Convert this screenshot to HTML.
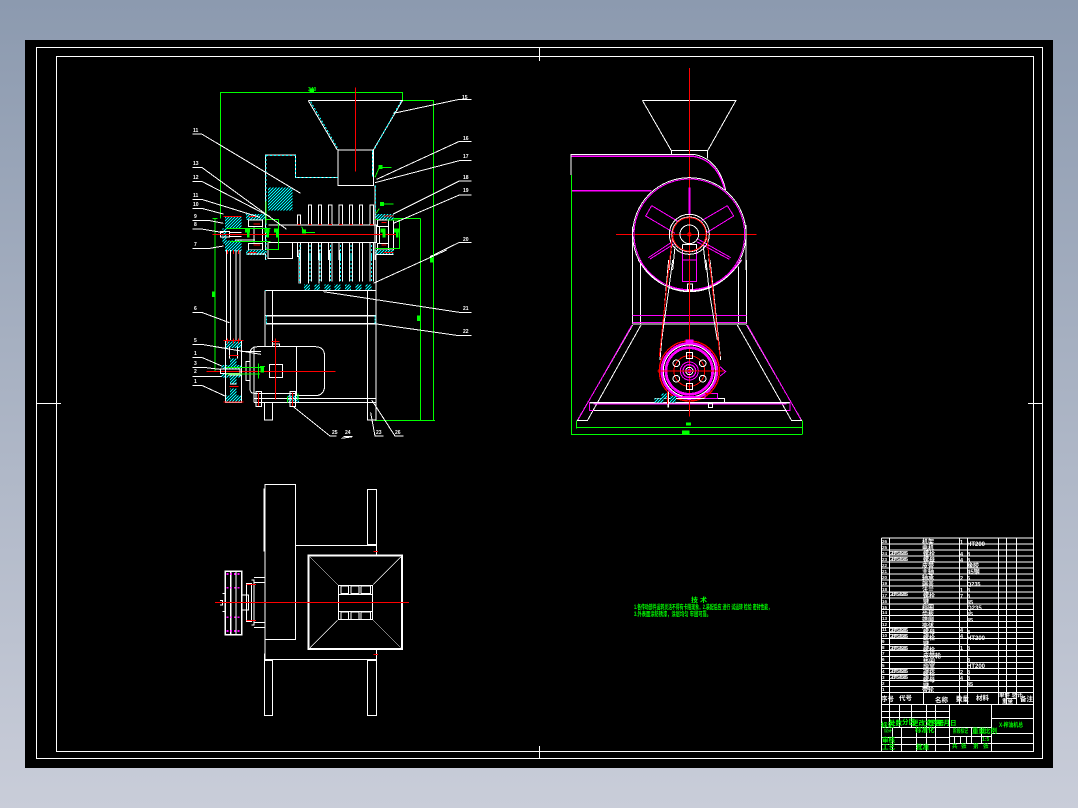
<!DOCTYPE html>
<html lang="zh">
<head>
<meta charset="utf-8">
<title>CAD drawing</title>
<style>
html,body{margin:0;padding:0;width:1078px;height:808px;overflow:hidden;background:linear-gradient(180deg,#8c9aaf 0%,#c9cdd9 100%)}
svg{position:absolute;left:0;top:0;display:block}
.w{stroke:#fff;fill:none}
.r{stroke:#f00;fill:none}
.m{stroke:#f0f;fill:none}
.g{stroke:#0f0;fill:none}
text{font-family:"Liberation Sans","Noto Sans CJK SC",sans-serif;font-weight:700}
</style>
</head>
<body>
<svg width="1078" height="808" viewBox="0 0 1078 808" xmlns="http://www.w3.org/2000/svg" shape-rendering="crispEdges">
<defs>
<pattern id="hz" patternUnits="userSpaceOnUse" width="9" height="9"><rect width="9" height="9" fill="#000"/><path d="M-1 10L10 -1M-5 5L5 -5M5 14L14 5" stroke="#0ff" stroke-width="4"/></pattern>
</defs>
<rect x="25" y="40" width="1028" height="728" fill="#000"/>
<!-- frames -->
<g class="w" stroke-width="1">
<rect x="36.5" y="47.5" width="1006" height="711"/>
<rect x="56.5" y="56.5" width="977" height="695"/>
<path d="M539.5 47V61M539.5 746V758M36 403.5H61M1028 403.5H1042"/>
</g>

<!-- MAIN VIEW upper: zoom coords -->
<g transform="translate(180 80) scale(.33333)" fill="none" stroke-width="3">
<path class="g" d="M121 415V37H667V62H760V540M667 37V62M721 415V540"/>
<path class="g" d="M590 415H721"/>
<path class="g" d="M105 415V540M98 415H112"/>
<rect x="388" y="25" width="14" height="12" fill="#0f0"/>
<!-- hatch -->
<g fill="url(#hz)" stroke="none">
<rect x="264" y="322" width="74" height="70"/>
<rect x="135" y="408" width="50" height="37"/>
<rect x="127" y="445" width="13" height="45"/>
<rect x="135" y="482" width="50" height="33"/>
<rect x="198" y="402" width="60" height="18"/>
<rect x="198" y="510" width="60" height="15"/>
<rect x="585" y="402" width="55" height="18"/>
<rect x="585" y="510" width="55" height="15"/>
</g>
<!-- funnel -->
<path class="w" d="M385 62H667L580 210M385 62L472 210"/>
<path stroke="#0ff" stroke-dasharray="6 5" d="M392 65L475 208M662 65L583 208"/>
<rect class="w" x="474" y="210" width="106" height="106"/>
<path class="w" d="M257 540V225H346V293H472M585 316V540M578 210V290"/>
<path stroke="#0ff" stroke-dasharray="6 6" stroke-width="3" d="M258 225V540M258 226H346V293H472M587 316V402M578 212V290"/>
<path class="r" d="M526 22V275"/>
<!-- shaft -->
<path class="w" d="M265 435H590V487H265M590 435V487M248 442V487M222 442V487"/>
<path class="w" d="M264 487V535H338V487"/>
<path class="w" d="M165 445H225M165 480H225M148 457H185M148 470H185"/>
<rect x="122" y="455" width="26" height="16" class="w"/>
<path class="w" d="M205 420H248V440H205ZM205 490H248V510H205ZM592 420H625V440H592ZM592 490H625V510H592ZM625 420H640V510H625ZM598 440V490"/>
<path class="w" d="M140 515V540M152 515V540M168 515V540M180 515V540"/>
<!-- ribs -->
<path class="w" d="M352 435V405H362V435M385 435V375H395V435M415 435V375H425V435M446 435V375H456V435M477 435V375H487V435M508 435V375H518V435M538 435V375H548V435M570 435V375H580V435"/>
<path class="r" stroke-width="3" d="M352 433H362M385 433H395M415 433H425M446 433H456M477 433H487M508 433H518M538 433H548M570 433H580"/>
<path class="w" d="M352 488V530H362V488M385 488V540M395 488V540M415 488V540M425 488V540M446 488V540M456 488V540M477 488V540M487 488V540M508 488V540M518 488V540M538 488V540M548 488V540M570 488V540M580 488V540"/>
<path stroke="#0ff" stroke-dasharray="6 6" d="M360 495V540M390 495V540M420 495V540M451 495V540M482 495V540M513 495V540M574 495V540"/>
<path class="r" d="M97 463H650M205 410H230M205 517H230M610 408H640M610 517H640M220 432H240M220 495H240M605 428H620M605 495H620M130 410H185"/>
<path class="r" d="M142 510V522M160 510V522M176 510V522"/>
<!-- green -->
<path class="g" d="M258 418H296V508H258M140 445H272M150 485H272M258 364V430M585 418H595M585 505H658V420H622M598 385L588 400M598 262L585 292"/>
<path class="g" stroke-width="3" d="M365 440L372 457H405M600 262H635M600 372H640"/>
<g fill="#0f0" stroke="none">
<rect x="195" y="446" width="15" height="12"/><rect x="201" y="458" width="8" height="14"/>
<rect x="253" y="446" width="15" height="12"/><rect x="259" y="458" width="8" height="14"/>
<rect x="282" y="446" width="15" height="12"/><rect x="288" y="458" width="8" height="14"/>
<rect x="602" y="446" width="15" height="12"/><rect x="608" y="458" width="8" height="14"/>
<rect x="642" y="446" width="15" height="12"/><rect x="648" y="458" width="8" height="14"/>
<rect x="366" y="448" width="12" height="12"/><rect x="595" y="255" width="12" height="12"/><rect x="600" y="366" width="12" height="12"/>
</g>
<!-- leaders -->
<path class="w" d="M640 100L838 58H875M590 298L838 184H875M585 308L838 242H875M640 402L838 303H875M640 430L838 345H875M750 530L838 487H875"/>
<path class="w" d="M362 340L65 162H38M320 448L65 262H38M270 410L65 304H38M240 412L65 358H38M130 402L65 385H38M130 430L90 422H38M130 458L65 447H38M130 498L90 505H38"/>
</g>

<!-- MAIN VIEW lower -->
<g transform="translate(180 250) scale(.33333)" fill="none" stroke-width="3">
<path class="g" d="M721 0V510M760 0V510M585 511H765M105 0V365"/>
<rect x="96" y="125" width="10" height="16" fill="#0f0"/>
<rect x="711" y="196" width="11" height="17" fill="#0f0"/>
<rect x="750" y="22" width="10" height="16" fill="#0f0"/>
<path class="w" d="M140 0V270M152 0V270M168 0V270M180 0V270"/>
<!-- ribs -->
<path class="w" d="M357 0V100M362 0V100M385 0V100M395 0V95M417 0V100M425 0V95M448 0V95M456 0V95M478 0V95M487 0V95M509 0V95M517 0V95M539 0V95M547 0V95M570 0V95M580 0V95"/>
<path stroke="#0ff" stroke-dasharray="6 6" stroke-width="3" d="M359 15V100M390 15V95M420 15V95M451 15V95M482 15V95M513 15V95M574 15V95"/>
<g fill="url(#hz)" stroke="none">
<rect x="372" y="103" width="18" height="18"/><rect x="403" y="103" width="17" height="18"/><rect x="433" y="103" width="19" height="18"/><rect x="464" y="103" width="18" height="18"/><rect x="495" y="103" width="18" height="18"/><rect x="526" y="103" width="18" height="18"/><rect x="556" y="103" width="18" height="18"/>
<rect x="136" y="274" width="49" height="20"/>
<rect x="150" y="325" width="20" height="28"/>
<rect x="124" y="345" width="60" height="10"/>
<rect x="124" y="372" width="60" height="10"/>
<rect x="150" y="382" width="20" height="20"/>
<rect x="150" y="415" width="20" height="22"/>
<rect x="136" y="437" width="49" height="20"/>
<rect x="322" y="435" width="35" height="22"/>
<rect x="198" y="0" width="60" height="12"/>
<rect x="585" y="0" width="55" height="14"/>
</g>
<path class="w" d="M264 0V25H338V0M200 12H258M590 14H640"/>
<path class="r" d="M205 7H230M610 7H640"/>
<path stroke="#0ff" stroke-width="3" stroke-dasharray="6 4" d="M255 122H590"/>
<path class="w" d="M255 122V290M277 122V290M258 122H590"/>
<path class="w" d="M588 0V510H562V122M562 122V458"/>
<path class="w" d="M257 197H586M258 222H586"/>
<path class="w" stroke-width="4" d="M258 197H586M258 221H586"/>
<path stroke="#0ff" stroke-width="3" stroke-dasharray="5 4" d="M259 197V222M585 197V222"/>
<path class="w" d="M254 458V510H277V458"/>
<path class="w" d="M222 445H586M222 458H586M222 430V458"/>
<!-- motor -->
<path class="w" d="M235 290H405Q434 290 434 320V405Q434 437 405 437H350V430H222Q210 430 210 415V310Q210 290 235 290ZM350 290V437"/>
<path class="w" d="M198 334H210V392H198ZM222 290V430"/>
<rect class="w" x="268" y="343" width="39" height="40"/>
<path class="w" d="M277 290V282H298V290"/>
<path class="r" d="M287 265V448M80 364H467M275 275H298"/>
<!-- pulley -->
<path class="w" d="M136 270V458H185V270M148 290V325M172 290V325M136 345V345M136 382V458M185 382V458M150 402H170"/>
<rect class="w" x="122" y="357" width="58" height="14"/>
<path class="w" d="M185 305H243M145 352H185M145 375H185"/>
<path class="r" d="M130 272H190M130 456H190M148 316H176M148 409H176M142 265V280M160 265V280M176 265V280"/>
<path class="g" d="M138 352H245M138 372H240M236 340V385M240 350H255"/>
<rect x="242" y="348" width="10" height="20" fill="#0f0"/>
<path class="w" d="M228 425H244V470H228ZM330 425H346V470H330Z"/>
<path class="r" d="M235 428V468M338 428V468"/>
<path class="g" d="M322 440V458M354 430V450"/>
<!-- leaders -->
<path class="w" d="M800 0L580 100M875 187H838L430 125M875 256H830L590 222"/>
<path class="w" d="M38 187H65L148 218M38 284H70L243 313M38 322H65L125 348M38 352H70L120 358M38 380H125M38 406H65L135 438"/>
<path class="w" d="M340 470L450 558H470M485 565L518 560H490M572 488L585 558H610M575 450L645 558H670"/>
</g>
<g fill="#fff" font-size="5">
<text x="462" y="99">15</text><text x="463" y="140">16</text><text x="463" y="158">17</text><text x="463" y="179">18</text><text x="463" y="192">19</text><text x="463" y="241">20</text>
<text x="463" y="310">21</text><text x="463" y="333">22</text>
<text x="193" y="132">11</text><text x="193" y="165">13</text><text x="193" y="179">12</text><text x="193" y="197">11</text><text x="193" y="206">10</text><text x="194" y="218">9</text><text x="194" y="226">8</text><text x="194" y="246">7</text>
<text x="194" y="310">6</text><text x="194" y="342">5</text><text x="194" y="355">1</text><text x="194" y="365">3</text><text x="194" y="373">2</text><text x="194" y="383">1</text>
<text x="332" y="434">25</text><text x="345" y="434">24</text><text x="376" y="434">23</text><text x="395" y="434">26</text>
</g>
<g fill="#0f0" font-size="5"><text x="308" y="91">340</text></g>

<!-- SIDE VIEW -->
<g transform="translate(560 90) scale(.33333)" fill="none" stroke-width="3">
<path class="w" d="M247 31H528L443 182V205M247 31L334 182V195M334 182H443"/>
<path class="r" d="M388 -66V540M168 433H590"/>
<path class="w" d="M33 255V193H400Q475 205 497 300"/>
<path class="m" stroke-width="4" d="M35 199H400Q470 210 494 298"/>
<path class="g" d="M34 255V540"/>
<path class="m" stroke-width="4" d="M36 302H275"/>
<circle class="w" cx="388" cy="433" r="170"/>
<circle class="m" cx="388" cy="433" r="166"/>
<path class="w" d="M218 410V540M558 405V540"/>
<path class="m" stroke-width="6" d="M388 292V375"/>
<path class="m" d="M275 347L257 378L345 430M275 347L355 395M502 347L521 378L440 428M502 347L425 392"/>
<path class="m" d="M265 503L340 453M270 507L345 460M512 503L415 448M508 508L412 456"/>
<path class="w" d="M367 463H410V540M367 463V540"/>
<path class="m" d="M367 485V540M410 485V540"/>
<circle class="w" cx="388" cy="433" r="60"/>
<circle class="w" cx="388" cy="433" r="52"/>
<circle class="r" cx="388" cy="433" r="50" stroke-width="3"/>
<circle class="w" cx="388" cy="433" r="28"/>
<circle class="r" cx="388" cy="433" r="5"/>
<path class="w" d="M328 540L335 460M338 540L345 470M438 540L430 470M450 540L443 460"/>
<path class="r" d="M326 540L337 440M452 540L440 440"/>
</g>
<g transform="translate(560 260) scale(.33333)" fill="none" stroke-width="3">
<path class="w" d="M218 0V190M242 0V190M535 20V190M560 0V190"/>
<path class="w" d="M235 0Q300 95 388 95Q480 95 545 0"/>
<path class="m" d="M238 0Q300 90 388 90Q478 90 542 0"/>
<rect class="m" x="367" y="0" width="43" height="65"/>
<rect class="w" x="382" y="72" width="16" height="18"/>
<path class="w" d="M218 166H560"/>
<path class="m" d="M218 166H560"/>
<path class="m" stroke-width="3" d="M218 188H560"/>
<path class="w" d="M218 192H560"/>
<!-- belt -->
<path class="w" d="M326 0L318 90L300 300M338 0L326 90L305 240M438 0L447 90L472 240M450 0L460 90L482 300"/>
<path class="r" d="M329 0L318 100L298 290M448 0L459 100L480 290"/>
<!-- base -->
<path class="w" d="M218 195L52 482H82L243 195M560 195L725 482H695L532 195"/>
<path class="m" d="M216 195L55 478M562 195L722 478"/>
<path class="w" stroke-width="5" d="M88 428H690"/>
<path class="m" d="M88 428V452H100M690 428V452H680M100 432H680"/>
<path class="w" d="M100 452H680"/>
<path class="g" d="M50 482V505M727 482V522M50 503H727M35 0V525M35 524H727"/>
<rect x="378" y="487" width="15" height="10" fill="#0f0"/><rect x="366" y="511" width="22" height="11" fill="#0f0"/>
<path class="r" d="M388 0V470"/>
<!-- small pulley -->
<circle cx="388" cy="333" r="90" class="r" stroke-width="4"/>
<circle cx="388" cy="333" r="82" class="m" stroke-width="9"/>
<circle cx="388" cy="333" r="78" class="w"/>
<circle cx="388" cy="333" r="70" class="m" stroke-width="8"/>
<circle cx="388" cy="333" r="46" class="r"/>
<g class="w"><circle cx="349" cy="310" r="10"/><circle cx="428" cy="310" r="10"/><circle cx="349" cy="356" r="10"/><circle cx="428" cy="356" r="10"/></g>
<rect x="380" y="278" width="17" height="17" class="w"/><rect x="380" y="371" width="17" height="17" class="w"/>
<circle cx="388" cy="333" r="27" class="m"/>
<circle cx="388" cy="333" r="19" class="m" stroke-width="4"/>
<circle cx="388" cy="333" r="11" class="w"/>
<circle cx="388" cy="333" r="5" class="m"/>
<path class="r" d="M292 333H492"/>
<path class="m" d="M480 320L497 335L480 348"/>
<rect x="376" y="239" width="24" height="8" fill="#f0f"/>
<rect x="366" y="408" width="44" height="8" fill="#f0f"/>
<path class="w" d="M283 415H493V428"/>
<g fill="url(#hz)" stroke="none"><rect x="283" y="415" width="27" height="13"/><rect x="305" y="400" width="17" height="15"/><rect x="330" y="408" width="18" height="20"/></g>
<path class="w" stroke-width="5" d="M325 395V442"/>
<path class="r" d="M322 395V432"/>
<rect x="435" y="400" width="37" height="15" class="m"/>
<path class="r" d="M435 400H455"/>
<path class="w" d="M446 430H458V442H446Z"/>
</g>

<!-- TOP VIEW -->
<g transform="translate(200 475) scale(.33333)" fill="none" stroke-width="3">
<path class="w" d="M195 28H287V493H195ZM192 40V230M287 211H529V208H503V43H529V208M195 493V553H529V525M529 211V240M193 535V721H218V556H193M503 556H529V721H503Z"/>
<rect x="326" y="242" width="280" height="280" class="w" stroke-width="6"/>
<path class="w" stroke-width="2" d="M330 246L415 331M602 246L518 331M330 518L415 434M602 518L518 434"/>
<rect class="w" x="415" y="331" width="103" height="103"/>
<path class="w" d="M415 358H518M415 410H518M423 333V356H445V333ZM453 333V356H477V333ZM483 333V356H511V333ZM423 411V433H445V411ZM453 411V433H477V411ZM483 411V433H511V411Z"/>
<path class="w" stroke-width="4" d="M76 289H125V479H76ZM92 289V479M108 289V479"/>
<path class="m" stroke-width="5" stroke-dasharray="5 6" d="M80 297H122M80 338H122M80 427H122M80 468H122"/>
<path class="w" d="M125 360H145V405H125M139 325H155V440H139ZM155 315H162V450H155M162 307H195V322H162M162 443H195V458H162M67 355H76V410H67M60 376H67V390H60"/>
<path class="r" d="M45 382H627M140 328H168M140 437H168M520 229H534M520 538H534"/>
</g>

<!-- green notes -->
<g fill="#0f0" font-size="6.5">
<text x="691" y="602" textLength="16" lengthAdjust="spacingAndGlyphs">技 术</text>
<text x="634" y="609" font-size="6.5" textLength="138" lengthAdjust="spacingAndGlyphs">1.各传动部件运转灵活不得有卡阻现象，2.装配后应 进行 试运转 检验 密封性能，</text>
<text x="634" y="616" font-size="6.5" textLength="77" lengthAdjust="spacingAndGlyphs">3.外表面涂防锈漆，涂层均匀 牢固可靠。</text>
</g>

<!-- TABLE -->
<g class="w" stroke-width="1">
<path d="M881.5 538H1034M881 544H1034M881 550H1034M881 556H1034M881 562H1034M881 568H1034M881 574H1034M881 580H1034M881 586H1034M881 592H1034M881 598H1034M881 604H1034M881 609.5H1034M881 615.5H1034M881 621.5H1034M881 627.5H1034M881 632.5H1034M881 638.5H1034M881 644.5H1034M881 650.5H1034M881 656.5H1034M881 662.5H1034M881 668.5H1034M881 674.5H1034M881 680.5H1034M881 686.5H1034"/>
<path stroke-width="1" d="M881 692.5H1034M881 704.5H1034"/>
<path d="M881.5 538V751M889.5 538V704M959.5 538V704M967.5 538V704M998.5 538V704M1006.5 538V704M1016.5 538V704M923.5 692V704M1033.5 538V751"/>
<path d="M1006 698.5H1016"/>
<path d="M881 711.5H949M881 717.5H949M881 727.5H949M881 737.5H949M881 744.5H949M889.5 704V727M899.5 704V727M911.5 704V727M926.5 704V751M935.5 704V751M892.5 727V751M901.5 727V751M916.5 727V751"/>
<path d="M949.5 704V751M991.5 704V751M949 727.5H991M949 736.5H991M949 743.5H991M954.5 736V743M960.5 736V743M966.5 736V743M971.5 727V743M981.5 727V743"/>
<path d="M991 718.5H1033M991 733.5H1033M991 743.5H1033"/>
</g>
<g fill="#fff" font-size="4.5">
<text x="882" y="543">26</text><text x="882" y="549">25</text><text x="882" y="555">24</text><text x="882" y="561">23</text><text x="882" y="567">22</text><text x="882" y="573">21</text><text x="882" y="579">20</text><text x="882" y="585">19</text><text x="882" y="591">18</text><text x="882" y="597">17</text><text x="882" y="603">16</text><text x="882" y="609">15</text><text x="882" y="614">14</text><text x="882" y="620">13</text><text x="882" y="626">12</text><text x="882" y="631">11</text><text x="882" y="637">10</text><text x="882" y="643">9</text><text x="882" y="649">8</text><text x="882" y="655">7</text><text x="882" y="661">6</text><text x="882" y="667">5</text><text x="882" y="673">4</text><text x="882" y="679">3</text><text x="882" y="685">2</text><text x="882" y="691">1</text>
</g>
<g fill="#fff" font-size="5" lengthAdjust="spacingAndGlyphs">
<text x="889" y="555" textLength="19">GB/T5782-86</text><text x="889" y="561" textLength="19">GB/T5783-86</text><text x="889" y="596" textLength="19">GB/T5782-86</text><text x="889" y="632" textLength="19">GB/T5782-86</text><text x="889" y="638" textLength="19">GB/T5783-86</text><text x="889" y="650" textLength="19">GB/T5782-86</text><text x="889" y="673" textLength="19">GB/T5782-86</text><text x="889" y="679" textLength="19">GB/T5783-86</text>
</g>
<g fill="#fff" font-size="6">
<text x="922" y="544">机架</text><text x="922" y="550">电机</text><text x="923" y="556">螺栓</text><text x="923" y="562">螺母</text><text x="922" y="568">皮带</text><text x="922" y="574">主轴</text><text x="922" y="580">轴承</text><text x="922" y="586">端盖</text><text x="922" y="592">法兰</text><text x="923" y="598">螺栓</text><text x="923" y="604">键</text><text x="922" y="610">挡圈</text><text x="922" y="616">齿板</text><text x="922" y="622">筛网</text><text x="922" y="628">壳体</text><text x="923" y="634">螺母</text><text x="923" y="640">螺栓</text><text x="923" y="646">键</text><text x="923" y="652">螺栓</text><text x="923" y="658">皮带轮</text><text x="923" y="664">垫圈</text><text x="923" y="670">端盖</text><text x="923" y="676">螺栓</text><text x="923" y="682">螺母</text><text x="923" y="688">键</text><text x="922" y="692">带轮</text>
</g>
<g fill="#fff" font-size="5.5">
<text x="960" y="544">1</text><text x="960" y="556">4</text><text x="960" y="562">4</text><text x="960" y="580">2</text><text x="960" y="592">1</text><text x="960" y="598">7</text><text x="960" y="632">4</text><text x="960" y="638">4</text><text x="960" y="650">1</text><text x="960" y="674">2</text><text x="960" y="680">4</text>
<text x="967" y="546" font-size="6">HT200</text><text x="967" y="556">8</text><text x="967" y="562">8</text><text x="967" y="568" font-size="6">橡胶</text><text x="967" y="574" font-size="6">45钢</text><text x="967" y="580">6</text><text x="967" y="586">Q235</text><text x="967" y="592">8</text><text x="967" y="598">8</text><text x="967" y="604">45</text><text x="967" y="610" font-size="6">Q235</text><text x="967" y="616">45</text><text x="967" y="622">45</text><text x="967" y="634">8</text><text x="967" y="640" font-size="6">HT200</text><text x="967" y="650">8</text><text x="967" y="662">8</text><text x="967" y="668" font-size="6">HT200</text><text x="967" y="674">8</text><text x="967" y="680">8</text><text x="967" y="686">45</text>
</g>
<g fill="#fff" font-size="6.5">
<text x="881" y="701">序号</text><text x="899" y="700">代号</text><text x="935" y="702">名称</text><text x="956" y="701">数量</text><text x="976" y="700">材料</text><text x="999" y="697" font-size="5.5">单件 总计</text><text x="1002" y="703" font-size="5.5">重量</text><text x="1020" y="701">备注</text>
</g>
<!-- title block green -->
<g fill="#0f0" font-size="6.5">
<text x="881" y="727">标记</text><text x="889" y="725">处数</text><text x="902" y="724">分区</text><text x="912" y="725">更改文件号</text><text x="928" y="725">签名</text><text x="937" y="725">年月日</text>
<text x="884" y="732" font-size="4">设计</text><text x="915" y="732">标准化</text>
<text x="882" y="742">审核</text><text x="882" y="749">工艺</text><text x="916" y="749">批准</text>
<text x="953" y="733" font-size="6" textLength="15" lengthAdjust="spacingAndGlyphs">阶段标记</text><text x="972" y="733">重量</text><text x="984" y="733">比例</text><text x="982" y="741" font-size="5">1:5</text>
<text x="952" y="748" font-size="5.5">共</text><text x="961" y="748" font-size="5.5">张</text><text x="973" y="748" font-size="5.5">第</text><text x="983" y="748" font-size="5.5">张</text>
<text x="999" y="727" font-size="6" textLength="24" lengthAdjust="spacingAndGlyphs">X-榨油机总</text>
</g>
</svg>
</body>
</html>
